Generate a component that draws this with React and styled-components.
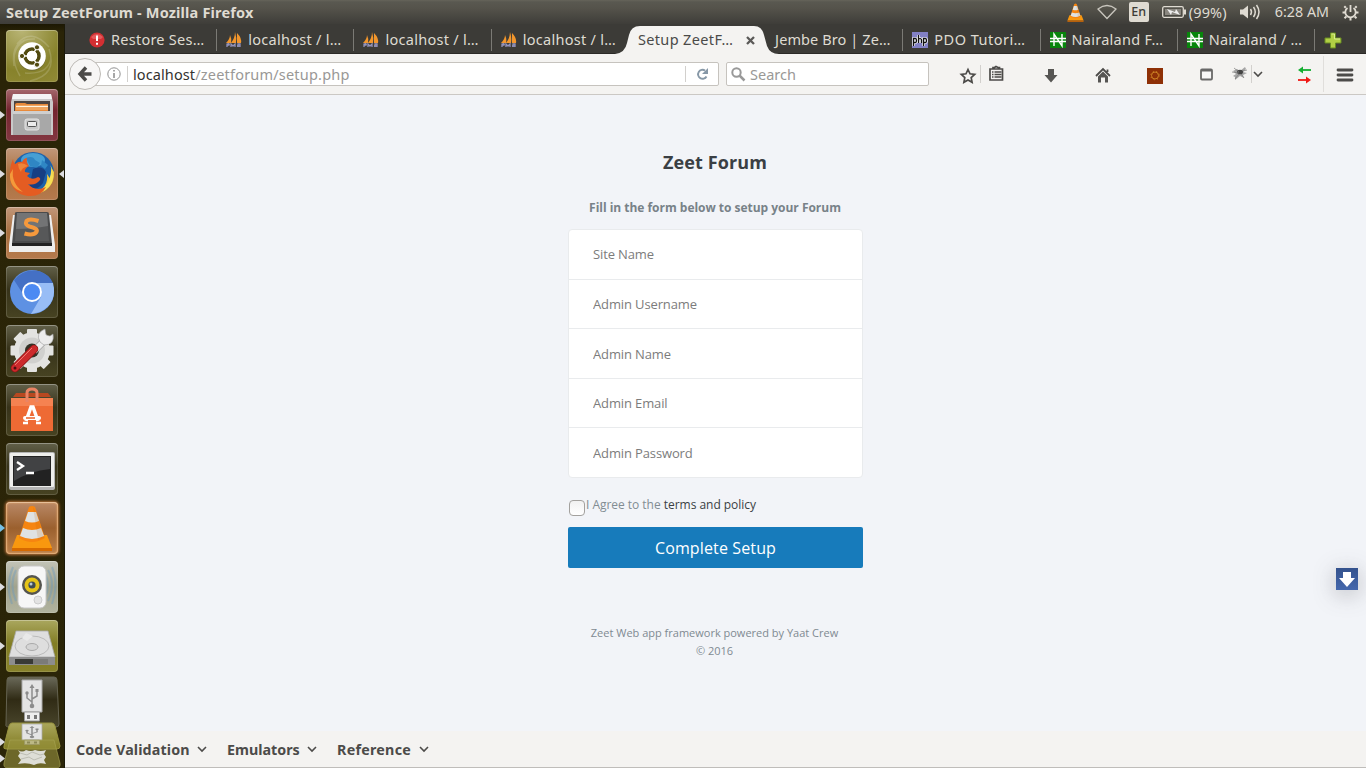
import React from "react";
import styled, { createGlobalStyle, css } from "styled-components";

const ui = `"Noto Sans", "Open Sans", sans-serif`;
const web = `"Open Sans", "Noto Sans", sans-serif`;

const Global = createGlobalStyle`
  * { box-sizing: border-box; }
  html, body { margin: 0; padding: 0; background: #2a2407; }
  svg { display: block; flex: none; overflow: visible; }
`;

const Desktop = styled.div`
  width: 1366px; height: 768px; overflow: hidden;
  display: flex; flex-direction: column;
  font-family: ${ui};
`;
const Label = styled.span`
  font-size: ${p => p.$size || 14}px;
  letter-spacing: ${p => p.$track || 0}px;
  font-weight: ${p => (p.$bold ? 700 : 400)};
  color: ${p => p.$color || "inherit"};
  line-height: 20px;
  white-space: pre;
`;

/* Panel */
const Panel = styled.header`
  height: 24px; flex: none;
  display: flex; align-items: center; justify-content: space-between;
  padding: 0 7px 0 6px;
  color: #dfdbd2;
  background: linear-gradient(#66645a 0, #595850 2px, #55534b 8px, #3e3d39 24px);
`;
const Indicators = styled.div`
  display: flex; align-items: center; height: 24px;
`;
const Slot = styled.div`
  display: flex; align-items: center;
  margin-left: ${p => p.$gap || 0}px;
`;
const LanguageBadge = styled.div`
  width: 20px; height: 20px; margin-left: 12px;
  border-radius: 2px; background: #dfdbd2; color: #3c3b37;
  font-size: 12.5px; line-height: 20px; text-align: center; font-weight: 500;
`;

const Workspace = styled.div`
  flex: 1; min-height: 0; display: flex;
`;

/* Launcher */
const Launcher = styled.nav`
  width: 65px; flex: none; padding-top: 6px;
  display: flex; flex-direction: column; gap: 7px;
  background: linear-gradient(#1c1803 0, #2a2407 8px, #2b2508 100%);
  border-right: 1px solid #1b1909;
`;
const LauncherRow = styled.div`
  display: flex; align-items: center; height: 52px; position: relative; padding-left: 6px;
`;
const Tile = styled.div`
  width: 52px; height: 52px; border-radius: 4px; flex: none;
  background: ${p => p.$bg};
  box-shadow: inset 0 0 0 1px rgba(255,255,255,.14), inset 0 1px 0 rgba(255,255,255,.22)
    ${p => p.$glow && css`, 0 0 3px 1px #b9713a, inset 0 0 2px 1px #e8a868`};
`;
const FoldedStack = styled.div`
  margin-top: -2px;
`;
const RunningMark = styled.i`
  position: absolute; left: 0; top: 22px;
  border: 4px solid transparent; border-left: 5px solid ${p => p.$color || "#dcdce0"}; border-right: 0;
`;
const FocusMark = styled.i`
  position: absolute; right: 0; top: 22px;
  border: 4px solid transparent; border-right: 5px solid #dcdce0; border-left: 0;
`;

/* Browser */
const Browser = styled.main`
  flex: 1; min-width: 0; display: flex; flex-direction: column;
`;
const TabStrip = styled.div`
  height: 30px; flex: none; display: flex; padding-left: 14px;
  background: #3c3b37; border-bottom: 1px solid #2b2a27;
`;
const TabItem = styled.div`
  width: 137.22px; height: 29px; flex: none; position: relative;
  display: flex; align-items: center; gap: 6px;
  padding: 3px 0 0 ${p => (p.$bare ? 10 : 10)}px;
  color: ${p => (p.$active ? "#4a4a48" : "#dfdbd2")};
`;
const TabDivider = styled.i`
  position: absolute; right: -1px; top: 5px; width: 1px; height: 22px; background: #7b7a75;
`;
const TabShape = styled.svg`
  position: absolute; left: -13px; top: 2px;
`;
const TabText = styled(Label)`position: relative; margin-bottom: 2px;`;
const CloseMark = styled.svg`
  position: absolute; left: 118.5px; top: 12px;
`;
const NewTab = styled.div`
  padding: 8px 0 0 10px;
`;

const Toolbar = styled.div`
  height: 41px; flex: none; display: flex; align-items: center;
  background: #f4f3f1; border-bottom: 1px solid #cbc8c4; padding: 0 12px 0 4px;
`;
const BackButton = styled.button`
  width: 32px; height: 32px; flex: none; padding: 0; position: relative;
  border: 1px solid #bdbab5; border-radius: 50%; background: #f7f6f5;
  display: flex; align-items: center; justify-content: center;
`;
const FieldBox = styled.div`
  height: 24px; flex: none; display: flex; align-items: center;
  background: #fff; border: 1px solid #c6c3be; border-radius: 2px;
`;
const AddressBar = styled(FieldBox)`
  width: 634px; margin-left: -16px; padding-left: 21px;
`;
const SearchBar = styled(FieldBox)`
  width: 203px; margin-left: 7px; padding-left: 4px; gap: 5px;
`;
const Rule = styled.i`
  width: 1px; height: ${p => p.$h || 16}px; flex: none; background: ${p => p.$color || "#d2d0cd"};
  margin-left: ${p => p.$gap || 0}px;
`;
const AddressText = styled.div`
  flex: 1; padding-left: 5px; line-height: 20px;
`;

/* Web page */
const Page = styled.section`
  flex: 1; min-height: 0; background: #f2f4f8; position: relative;
  display: flex; flex-direction: column; align-items: center;
  font-family: ${web}; color: #7f8a90;
`;
const PageTitle = styled.h1`
  margin: 54px 0 0; font-size: 18px; line-height: 26px; font-weight: 700; color: #3a3f44;
  letter-spacing: .12px; padding-right: 1px;
`;
const Intro = styled.p`
  margin: 23px 0 0; font-size: 12px; line-height: 20px; font-weight: 700; color: #788288;
  letter-spacing: -.02px; padding-right: 1px;
`;
const Form = styled.form`
  width: 295px; margin-top: 11px;
`;
const FieldGroup = styled.div`
  height: 249px;
  display: flex; flex-direction: column;
  background: #fff; border: 1px solid #e9ebed; border-radius: 4px;
`;
const FormField = styled.input`
  flex: 1; min-height: 0; width: 100%; padding: .3px 24px 0; border: 0; background: transparent;
  border-top: ${p => (p.$first ? 0 : 1)}px solid #e9ebed;
  font: 13px ${web}; letter-spacing: -.13px; outline: none;
  &::placeholder { color: #7c7c7c; opacity: 1; }
`;
const Agreement = styled.label`
  height: 49px; display: flex; align-items: flex-start; padding: 17px 0 0 1px;
  font-size: 12px; line-height: 20px; color: #828d93; letter-spacing: -.03px;
`;
const Box = styled.span`
  width: 16px; height: 16px; margin: 5px 1px 0 0; border-radius: 4px;
  border: 1px solid #a3a19e; background: linear-gradient(#f1f1f1, #fff);
`;
const Terms = styled.a`color: #3a3f44;`;
const Submit = styled.button`
  width: 295px; height: 41px; padding: 0; border: 0; border-radius: 2px;
  background: #177bbb; color: #fff; font: 16px ${web}; letter-spacing: .13px;
`;
const Footer = styled.footer`
  margin-top: 56px; padding-right: 2px; text-align: center; font-size: 11px; line-height: 18px; color: #7f8a92;
`;
const Floating = styled.div`
  position: absolute; right: 8px; top: 473px; width: 22px; height: 22px;
  background: linear-gradient(#34528d, #4568ad); box-shadow: 0 4px 22px rgba(80,80,90,.36);
`;
const DevBar = styled.div`
  height: 37px; flex: none; display: flex; align-items: center; padding: 1px 0 0 11px; gap: 20px;
  background: #f4f3f1; border-bottom: 1px solid #bfbdba; color: #4c4b49;
`;
const DevMenu = styled.div`
  display: flex; align-items: center; width: ${p => p.$w}px;
  justify-content: space-between;
`;

const Chevron = () => (
  <svg width="10" height="7"><path d="M1 1l4 4 4-4" fill="none" stroke="#4c4b49" strokeWidth="1.6" /></svg>
);

const Cone = ({ size }) => (
  <svg width={size} height={size} viewBox="0 0 52 52">
    <path d="M11 33h30l5 13H6z" fill="#f9980f" /><path d="M6 46h40v3H6z" fill="#d76a00" />
    <path d="M23 5q3-2 6 0l10 31q-13 8-26 0z" fill="#f68511" />
    <path d="M22 10h8l3 9q-7 3-14 0zM17 26q9 4 18 0l3 8q-12 6-24 0z" fill="#dfe2e2" />
    <path d="M27 5l3 5 8 26-6 2z" fill="#b95c00" opacity=".15" />
  </svg>
);

const Usb = () => (
  <g>
    <path d="M16 3h20v32H16z" fill="#e4e4e4" stroke="#aaa" />
    <path d="M18.500 35h15v9h-15z" fill="#eee" stroke="#999" />
    <path d="M21 38h3v4h-3zM28 38h3v4h-3z" fill="#777" />
    <path d="M26 11v19M26 25l-5-4v-5M26 22l5-3v-4" fill="none" stroke="#8c8c8c" strokeWidth="1.500" />
    <circle cx="26" cy="29" r="2.300" fill="#8c8c8c" /><circle cx="21" cy="16" r="1.700" fill="#8c8c8c" />
    <path d="M26 7l-2.500 4h5zM29.500 12h3v3h-3z" fill="#8c8c8c" />
  </g>
);

const Art = ({ kind }) => {
  if (kind === "vlc") return <Cone size={52} />;
  const art = {
    dash: <g>
      <g fill="none" stroke="#fff" strokeOpacity=".16" strokeWidth="1.500"><path d="M8 36Q4 8 29 9M14 46Q0 22 19 10M45 27Q43 45 19 43M24 51Q52 45 43 19M11 14Q25-3 43 17" /></g>
      <circle cx="26" cy="27" r="14" fill="#444" opacity=".25" /><circle cx="26" cy="26" r="13.800" fill="#fff" />
      <circle cx="26" cy="26" r="7" fill="none" stroke="#514a10" strokeWidth="3.600" />
      <path d="M26 26L14 26M26 26l6-10.500M26 26l6 10.500" stroke="#fff" strokeWidth="1.500" />
      <circle cx="26" cy="26" r="5.200" fill="#fff" />
      <g fill="#514a10" stroke="#fff"><circle cx="16" cy="26" r="2.600" /><circle cx="31" cy="17.300" r="2.600" /><circle cx="31" cy="34.700" r="2.600" /></g>
    </g>,
    files: <g>
      <path d="M7 5h38l2 8v33H5V13z" fill="#c9c9c9" /><path d="M7 5h38l1 5H6z" fill="#f4f4f4" />
      <path d="M8 12h36v11H8z" fill="#4c4441" /><path d="M9 16q0-2 2-2h8l2 1h21v9H9z" fill="#e88a3b" />
      <path d="M10 17.500h32" stroke="#fff4df" strokeWidth="1.500" /><path d="M10 20h32" stroke="#f9c081" />
      <path d="M7 22h38v24H7z" fill="#a8a8a8" /><path d="M7 22h38v3H7z" fill="#cfcfcf" />
      <rect x="19" y="30" width="14" height="11" rx="2" fill="#c9c9c9" stroke="#e4e4e4" />
      <rect x="21.500" y="32.500" width="9" height="5" rx="1" fill="#ececec" stroke="#555" />
    </g>,
    firefox: <g>
      <circle cx="27" cy="25" r="21" fill="#1d62aa" /><ellipse cx="27" cy="12" rx="12" ry="7" fill="#58b9e6" opacity=".7" />
      <path d="M20 10q7-3 9 2l5 3-3 5-7-2zM36 12l6 5-3 4-4-3z" fill="#2f86c4" />
      <path d="M27 21q9-4 13 3l-3 11q-6 8-14 6z" fill="#173f84" />
      <path d="M44 17q4 8 1 15l-4-6q2 14-13 19l-10-1q12 5 22-2 9-7 8-18z" fill="#f8cc3d" />
      <path d="M45 18q5 13-2 21-8 8-19 7 13-2 18-12 4-8 3-16z" fill="#f6df55" />
      <path d="M7 11q0 3 2 5 4-3 7-2 2-4 5-4-1 4 2 8-5 3-4 6l5 1-3 3q5 5 11 1 3 1 2 3-5 6-12 4 7 8 18 3-5 10-18 9Q6 46 4 30 3 20 7 11z" fill="#e45c22" />
      <path d="M7 21q-2 14 10 23Q3 40 4 26z" fill="#f39a3b" />
      <path d="M12 16q5-2 10 2-7 2-7 6-3-4-3-8z" fill="#ef8438" />
    </g>,
    sublime: <g>
      <path d="M7 8h38l4 30v7H3v-7z" fill="#eee" /><path d="M9 6q0-1 2-1h30q2 0 2 2l3 30q0 2-3 2H9q-3 0-3-2z" fill="#4a4b4c" />
      <path d="M11 6h30l2 28H9z" fill="#575859" /><path d="M11 6h30l1 13q-15 3-32 3z" fill="#737475" /><path d="M6 36h40v3H6z" fill="#222" />
      <path d="M32.500 14q-9-3-12 0-2 4 3 5.500 9 2 7 5.500-3 4-12 1.500" fill="none" stroke="#f6993c" strokeWidth="4" />
    </g>,
    chromium: <g>
      <circle cx="26" cy="26" r="22" fill="#5e91e3" /><path d="M8 14Q18 2 33 5q10 3 14 12H26q-8 1-9 11z" fill="#4470c5" />
      <path d="M47 17q5 20-13 29l-9 2 10-17q3-8-5-14z" fill="#98bdf6" /><circle cx="26" cy="26" r="10" fill="#fff" /><circle cx="26" cy="26" r="8" fill="#4c8af3" />
    </g>,
    settings: <g>
      <g fill="#e3e3e1">{[0, 45, 90, 135].map(a => <rect key={a} x="21" y="4" width="10" height="43" rx="1" transform={`rotate(${a} 26 25.500)`} />)}<circle cx="26" cy="25.500" r="18" /></g>
      <circle cx="26" cy="25.500" r="13" fill="#d0d0ce" /><circle cx="26" cy="25.500" r="7" fill="#333126" />
      <path d="M28 26L39 15" stroke="#999" strokeWidth="7" /><path d="M28 26L39 15" stroke="#eee" strokeWidth="6" /><path d="M34 17q-5-9 5-13l1 6 4 1 3-2q2 11-9 11z" fill="#ececec" stroke="#999" strokeWidth=".6" />
      <path d="M9 43l19-19" stroke="#881313" strokeWidth="8.500" strokeLinecap="round" /><path d="M9 43l19-19" stroke="#cc2a2c" strokeWidth="7" strokeLinecap="round" /><path d="M9 40l17-17" stroke="#ee7770" strokeWidth="1" /><circle cx="9" cy="43" r="1.500" fill="#4b1010" />
    </g>,
    software: <g>
      <path d="M7 13l3-4h32l3 4z" fill="#b84820" /><path d="M5 14h42v33H5z" fill="#ee6a34" /><path d="M5 14h42v8H5z" fill="#f58251" />
      <path d="M21 18V9q0-4 5-4t5 4v9" fill="none" stroke="#e98465" strokeWidth="3" />
      <path d="M20 37l5-14h2l5 14" fill="none" stroke="#fff" strokeWidth="3.500" /><path d="M19 34h14" stroke="#fff" strokeWidth="4" strokeLinecap="round" /><path d="M20 34h9" stroke="#e96028" strokeWidth="1.500" /><path d="M17 39h5M30 39h5" stroke="#fff" strokeWidth="2.500" />
    </g>,
    terminal: <g>
      <rect x="3" y="9" width="46" height="38" rx="2" fill="#b4b4b4" /><rect x="4" y="10" width="44" height="34" rx="1" fill="#eeeeec" /><rect x="7" y="13" width="38" height="30" fill="#222" /><path d="M8 14h36v12q-20 2-36 12z" fill="#414244" />
      <path d="M11 19l6 4-6 4M20 30h8" fill="none" stroke="#fff" strokeWidth="2.300" />
    </g>,
    speaker: <g>
      <g fill="none" stroke="#6998bd" strokeOpacity=".4" strokeWidth="2"><path d="M10 9q-7 14 0 31M7 6Q-1 24 6 43M42 9q8 14 0 31M46 6q7 17 0 37M39 12q6 13 0 24" /></g>
      <rect x="12" y="5" width="28" height="42" rx="6" fill="#f6f6f6" stroke="#c8c8c8" /><circle cx="26" cy="24" r="10" fill="#54544f" /><circle cx="26" cy="24" r="7.500" fill="#e5c417" /><circle cx="26" cy="24" r="3.600" fill="#3e4b53" /><circle cx="25" cy="23" r="1.500" fill="#b9c9d2" />
      <circle cx="32" cy="39" r="4" fill="#e3e3e3" stroke="#ccc" />
    </g>,
    disk: <g>
      <path d="M10 11h32l7 26H3z" fill="#dedede" stroke="#aaa" strokeWidth=".8" /><path d="M3 37h46v8H3z" fill="#8d8d8d" /><path d="M9 39h22v5H9z" fill="#393a36" /><path d="M27 39h15v5H27z" fill="#7b7b79" />
      <ellipse cx="26" cy="26" rx="17" ry="10" fill="none" stroke="#bbb" /><ellipse cx="26" cy="27" rx="6" ry="3.500" fill="#d4d4d4" stroke="#aaa" /><path d="M20 13l-4 5 5 3 6-5z" fill="#e9e9e9" />
    </g>,
  };
  return <svg width="52" height="52" viewBox="0 0 52 52">{art[kind]}</svg>;
};

const olive = "linear-gradient(#aaa75f, #827d24 45%, #88822b)";
const dark = "linear-gradient(#626049, #37331a 45%, #474322)";
const brown = "linear-gradient(#c1977a, #a9703f 50%, #b57a4d)";
const apps = [
  { kind: "dash", bg: "radial-gradient(circle at 30% 0, #b9b575, #87822b 65%, #918a36)" },
  { kind: "files", bg: "linear-gradient(#a5686c, #74252f 40%, #833741)", on: true },
  { kind: "firefox", bg: brown, on: true, focus: true },
  { kind: "sublime", bg: brown, on: true },
  { kind: "chromium", bg: dark },
  { kind: "settings", bg: dark },
  { kind: "software", bg: dark },
  { kind: "terminal", bg: dark },
  { kind: "vlc", bg: "linear-gradient(#b98968, #9b602e 50%, #bb814c)", on: true, glow: true, mark: "#76bfe4" },
  { kind: "speaker", bg: "linear-gradient(#c3c4b7, #a0a28d 50%, #b2b49f)", on: true },
  { kind: "disk", bg: olive, on: true },
];

const FoldedApps = () => (
  <svg width="64" height="91" viewBox="0 0 64 91">
    <defs>
      <linearGradient id="usbTile" x1="0" y1="0" x2="0" y2="1"><stop stopColor="#6a6959" /><stop offset=".45" stopColor="#302b15" /><stop offset="1" stopColor="#49452b" /></linearGradient>
      <linearGradient id="foldTile" x1="0" y1="0" x2="0" y2="1"><stop stopColor="#aaa65b" /><stop offset="1" stopColor="#807b22" /></linearGradient>
    </defs>
    <path d="M10 0h44q3 0 3 3l2 44q0 3-3 3H9q-4 0-3-3L7 3q0-3 3-3z" fill="url(#usbTile)" stroke="#646250" />
    <g transform="translate(6)"><Usb /></g>
    <path d="M12 46h40q2 0 3 3l5 20q0 3-3 3H6q-3 0-2-3l5-20q1-3 3-3z" fill="url(#foldTile)" stroke="#99943f" />
    <g transform="translate(6 45.500) scale(1 .5)"><Usb /></g>
    <path d="M10 63h44l6 23q1 5-4 5H8q-5 0-4-5z" fill="#99943f" fillOpacity=".6" stroke="#a9a553" strokeOpacity=".6" />
    <path d="M18 73q4 3 8 0 5 2 9 0 6 2 11 0l-2 4 2 3-2 3 2 4q-7-2-12 1-7-3-16-1l3-4-3-4 2-3z" fill="#deded6" />
    <path d="M20 76l7 2 5-3 8 3 4-1M21 82l8-2 5 3 8-3" fill="none" stroke="#bdbdb2" />
    <path d="M0 61v8l5-4zM0 77.500v8l5-4z" fill="#dcdce0" />
  </svg>
);

const Favicon = ({ kind }) => {
  if (kind === "alert") return <svg width="16" height="16"><circle cx="8" cy="8" r="7.600" fill="#d32f32" /><path d="M2 5q6-6 12 0l-2 2H4z" fill="#ef7777" opacity=".6" /><path d="M8 3.500v5.500M8 10.700v2" stroke="#fff" strokeWidth="2" /></svg>;
  if (kind === "pma") return <svg width="16" height="16"><path d="M0 11Q4 7 4 3q2 4 1 8zM5 11Q9 6 9 0q2 6 1 11zM11 11V1q5 5 4 10z" fill="#f2962c" /><path d="M1 15v-3q3-1 2 1H1M5 15v-3l2 2 2-2v3M12 15v-3h2v3M11 14h3" fill="none" stroke="#9494bd" strokeWidth="1.300" /></svg>;
  if (kind === "php") return <svg width="16" height="16"><path d="M0 0h16v16H0z" fill="#8280c4" /><path d="M1.500 14V6.500h2q1 0 1 2t-1 2h-2M6.500 3v8M6.500 7q3-1 3 1v3M11.500 14V6.500h2q1 0 1 2t-1 2h-2" fill="none" stroke="#fff" strokeWidth="2.600" /><path d="M1.500 14V6.500h2q1 0 1 2t-1 2h-2M6.500 3v8M6.500 7q3-1 3 1v3M11.500 14V6.500h2q1 0 1 2t-1 2h-2" fill="none" stroke="#111" strokeWidth="1.300" /></svg>;
  return <svg width="16" height="16"><path d="M0 0h16v16H0z" fill="#07850b" /><path d="M4 14V2l8 12V2M0 6.500h16M0 9.500h16" fill="none" stroke="#fff" strokeWidth="1.400" /></svg>;
};

const tabs = [
  { icon: "alert", text: "Restore Ses…", track: 0.25 },
  { icon: "pma", text: "localhost / l…", track: 0.28 },
  { icon: "pma", text: "localhost / l…", track: 0.28 },
  { icon: "pma", text: "localhost / l…", track: 0.28, last: true },
  { text: "Setup ZeetF…", track: 0.36, active: true },
  { text: "Jembe Bro | Ze…", track: 0.1 },
  { icon: "php", text: "PDO Tutori…", track: 0.48 },
  { icon: "naira", text: "Nairaland F…", track: 0.27 },
  { icon: "naira", text: "Nairaland / …", track: 0.2 },
];

const Tab = ({ tab }) => (
  <TabItem $active={tab.active}>
    {tab.active && <TabShape width="164" height="28"><path d="M0 28Q10 27 12 17L14 9Q16 0 25 0H139Q147 0 149 9L152 20Q155 28 164 28z" fill="#f4f3f1" /></TabShape>}
    {tab.icon && <Favicon kind={tab.icon} />}
    <TabText $size={14.5} $track={tab.track}>{tab.text}</TabText>
    {tab.active && <CloseMark width="9" height="9"><path d="M1 1l7 7M8 1L1 8" stroke="#5b5a58" strokeWidth="2.300" /></CloseMark>}
    {!tab.active && !tab.last && <TabDivider />}
  </TabItem>
);

const SystemPanel = () => (
  <Panel>
    <Label $bold $size={14.5} $track={0.18}>Setup ZeetForum - Mozilla Firefox</Label>
    <Indicators>
      <Cone size={21} />
      <Slot $gap={11}><svg width="20" height="16"><path d="M1 5Q10-2 19 5L10 14.500z" fill="none" stroke="#c9c6be" strokeWidth="1.300" /></svg></Slot>
      <LanguageBadge>En</LanguageBadge>
      <Slot $gap={13}><svg width="24" height="14"><rect x=".7" y="1.700" width="20.600" height="10.600" rx="1.500" fill="none" stroke="#dfdbd2" strokeWidth="1.300" /><path d="M3 4h16v6H3z" fill="#8a8780" /><path d="M22 4.500h2v5h-2z" fill="#dfdbd2" /><path d="M5 4l8 3 1-3 4 6-8-3-1 3z" fill="#eee" /></svg></Slot>
      <Slot $gap={3}><Label $size={14.5} $track={0.15}>(99%)</Label></Slot>
      <Slot $gap={13}><svg width="20" height="16"><path d="M0 5.500h3l5-4v13l-5-4H0z" fill="#dfdbd2" /><path d="M10.500 5q2 3 0 6M13.500 3q3.500 5 0 10M16.500 1q5 7 0 14" fill="none" stroke="#dfdbd2" strokeWidth="1.500" /></svg></Slot>
      <Slot $gap={15}><Label $size={14.3}>6:28 AM</Label></Slot>
      <Slot $gap={13}><svg width="17" height="17" viewBox="0 0 17 17"><g stroke="#dfdbd2" fill="none"><path d="M5.500 4A5.200 5.200 0 1 0 11.500 4" strokeWidth="1.800" /><path d="M8.500 1v7" strokeWidth="1.800" /><path d="M3.800 3.800L2.300 2.300M13.200 3.800l1.500-1.500M3 8.500H.5M14 8.500h2.500M4.300 12.500l-1.800 1.800M12.700 12.500l1.800 1.800M8.500 14v2.500" strokeWidth="2" /></g></svg></Slot>
    </Indicators>
  </Panel>
);

const NavigationBar = () => (
  <Toolbar>
    <BackButton><svg width="14" height="16"><path d="M8 1.500L2 8l6 6.500M2 8h11.500" fill="none" stroke="#4c4b49" strokeWidth="3.400" /></svg></BackButton>
    <AddressBar>
      <svg width="14" height="14"><circle cx="7" cy="7" r="6.200" fill="none" stroke="#929292" /><path d="M7 6v5M7 3v1.600" stroke="#8a8a8a" strokeWidth="1.500" /></svg>
      <Rule $gap={6} />
      <AddressText><Label $size={14.5} $track={0.1} $color="#33322f">localhost</Label><Label $size={14.5} $track={0.2} $color="#999896">/zeetforum/setup.php</Label></AddressText>
      <Rule />
      <Slot $gap={10}><svg width="22" height="14"><path d="M10.500 9.500A4.500 4.500 0 1 1 9 3.500" fill="none" stroke="#8798a7" strokeWidth="1.900" /><path d="M12 1v6H6z" fill="#8798a7" /></svg></Slot>
    </AddressBar>
    <SearchBar>
      <svg width="14" height="14"><circle cx="5.500" cy="5.500" r="4.200" fill="none" stroke="#999" strokeWidth="2" /><path d="M8.500 8.500l5 5" stroke="#999" strokeWidth="2.500" /></svg>
      <Label $size={14.5} $color="#999896">Search</Label>
    </SearchBar>
    <Slot $gap={31}><svg width="16" height="18"><path d="M8 4.500l2 4.300 4.700.6-3.500 3.200.9 4.700L8 15l-4.100 2.300.9-4.700-3.500-3.200 4.700-.6z" fill="none" stroke="#4c4b49" strokeWidth="1.700" /></svg></Slot>
    <Rule $gap={4} $h={18} />
    <Slot $gap={8}><svg width="15" height="16"><path d="M1 3h12.500v11H1zM4 2.500V1.500h1.500L7 .5l2 1h1.500v1" fill="none" stroke="#4c4b49" strokeWidth="1.700" /><path d="M3 6h1.500M3 8.500h1.500M3 11h1.500M5.500 6h7M5.500 8.500h7M5.500 11h7" stroke="#4c4b49" strokeWidth="1.300" /></svg></Slot>
    <Slot $gap={40}><svg width="14" height="16"><path d="M4 3h6v6h3.500L7 16.500 .5 9H4z" fill="#565553" /></svg></Slot>
    <Slot $gap={37}><svg width="16" height="16"><path d="M1 10l7-7 7 7M12.500 6V3.500" fill="none" stroke="#4c4b49" strokeWidth="1.800" /><path d="M3 10.500l5-5 5 5V16.500h-3v-5H6v5H3z" fill="#565553" /></svg></Slot>
    <Slot $gap={36}><svg width="16" height="19"><path d="M0 3h16v16H0z" fill="#8e3006" /><circle cx="8" cy="10.500" r="3.500" fill="none" stroke="#d28a28" strokeWidth=".9" /><circle cx="8" cy="10.500" r="4.300" fill="none" stroke="#d28a28" strokeDasharray="1 2.500" /></svg></Slot>
    <Slot $gap={37}><svg width="13" height="12"><rect x="1" y="1.500" width="11" height="10" rx="1" fill="#f7f7f7" stroke="#696968" strokeWidth="1.800" /><path d="M1 2.500h11" stroke="#696968" strokeWidth="2" /></svg></Slot>
    <Slot $gap={19}><svg width="16" height="16"><path d="M1 5l4-2 3 2 5-4 1 2-3 3 4 1-4 2 1 3-4-2-5 4v-3l-2-1 3-2z" fill="#a5a5a5" /><ellipse cx="8" cy="6" rx="3" ry="2.300" fill="#444" /><path d="M2 2l5 4M0 6l7 1M3 13l4-5M11 5l4-1M9 8l3 4" stroke="#777" strokeWidth=".7" /></svg></Slot>
    <Rule $gap={3} $h={18} />
    <Slot $gap={1}><Chevron /></Slot>
    <Slot $gap={35}><svg width="14" height="18"><path d="M4 5h9" stroke="#14ae31" strokeWidth="1.800" /><path d="M5 1.500V8.500L0 5z" fill="#14ae31" /><path d="M0 15h9" stroke="#f01814" strokeWidth="1.800" /><path d="M8 11.500v7l5-3.500z" fill="#f01814" /></svg></Slot>
    <Rule $gap={11} $h={36} $color="#e0dedb" />
    <Slot $gap={13}><svg width="16" height="12"><path d="M1 2h14M1 7h14M1 12h14" stroke="#4c4b49" strokeWidth="2.800" strokeLinecap="round" /></svg></Slot>
  </Toolbar>
);

const fields = ["Site Name", "Admin Username", "Admin Name", "Admin Email", "Admin Password"];

export default function App() {
  return (
    <Desktop>
      <Global />
      <SystemPanel />
      <Workspace>
        <Launcher>
          {apps.map(a => (
            <LauncherRow key={a.kind}>
              {a.on && <RunningMark $color={a.mark} />}
              <Tile $bg={a.bg} $glow={a.glow}><Art kind={a.kind} /></Tile>
              {a.focus && <FocusMark />}
            </LauncherRow>
          ))}
          <FoldedStack><FoldedApps /></FoldedStack>
        </Launcher>
        <Browser>
          <TabStrip>
            {tabs.map((t, i) => <Tab key={i} tab={t} />)}
            <NewTab><svg width="18" height="17"><path d="M6.500 1h5v5H17v5h-5.500v5h-5v-5H1V6h5.500z" fill="#b1cf45" stroke="#688c22" /><path d="M7.500 2h3v5H16" fill="none" stroke="#d9eb91" /></svg></NewTab>
          </TabStrip>
          <NavigationBar />
          <Page>
            <PageTitle>Zeet Forum</PageTitle>
            <Intro>Fill in the form below to setup your Forum</Intro>
            <Form>
              <FieldGroup>
                {fields.map((f, i) => <FormField key={f} $first={i === 0} placeholder={f} />)}
              </FieldGroup>
              <Agreement><Box /><span>I Agree to the <Terms>terms and policy</Terms></span></Agreement>
              <Submit type="button">Complete Setup</Submit>
            </Form>
            <Footer>Zeet Web app framework powered by Yaat Crew<br />© 2016</Footer>
            <Floating><svg width="22" height="22"><path d="M7 4h8v6h4l-8 9-8-9h4z" fill="#fff" /></svg></Floating>
          </Page>
          <DevBar>
            <DevMenu $w={131}><Label $bold $size={14.3} $track={0.12}>Code Validation</Label><Chevron /></DevMenu>
            <DevMenu $w={90}><Label $bold $size={14.3}>Emulators</Label><Chevron /></DevMenu>
            <DevMenu $w={92}><Label $bold $size={14.3} $track={0.25}>Reference</Label><Chevron /></DevMenu>
          </DevBar>
        </Browser>
      </Workspace>
    </Desktop>
  );
}
